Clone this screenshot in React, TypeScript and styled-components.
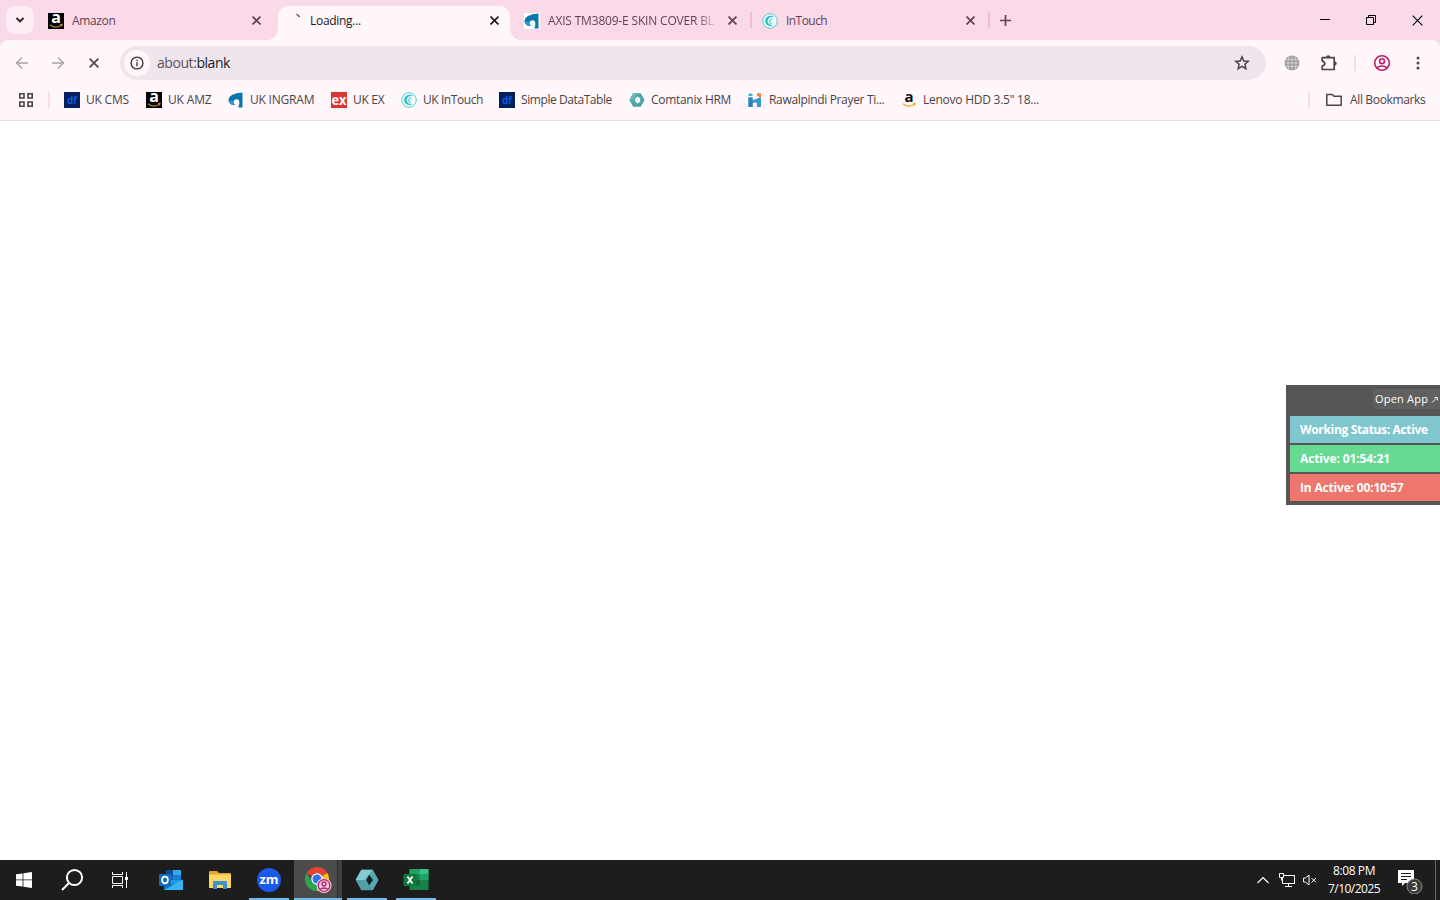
import React from "react";
import styled, { createGlobalStyle } from "styled-components";

const GlobalStyle = createGlobalStyle`
  *, *::before, *::after { box-sizing: border-box; }
  body { margin: 0; background: #fff; overflow: hidden; }
  svg { display: block; flex: none; }
`;

const UI_FONT = `"Segoe UI", "Open Sans", "Noto Sans", sans-serif`;

const Screen = styled.div`
  display: flex;
  flex-direction: column;
  width: 1440px;
  height: 900px;
  font-family: ${UI_FONT};
  font-size: 12px;
  color: #4b4347;
`;

const Label = styled.span<{ $w?: number; $track?: number; $color?: string }>`
  flex: none;
  width: ${(p) => (p.$w ? `${p.$w}px` : "auto")};
  line-height: 16px;
  letter-spacing: ${(p) => p.$track ?? 0}px;
  color: ${(p) => p.$color ?? "inherit"};
  white-space: nowrap;
`;

const TabStrip = styled.header`
  display: flex;
  height: 40px;
  flex: none;
  background: #fad9e9;
  color: #673f54;
`;

const TabSearchSlot = styled.div`
  width: 40px;
  padding: 6px 0 0 6px;
`;

const TabSearch = styled.button`
  display: grid;
  place-items: center;
  width: 28px;
  height: 28px;
  padding: 0;
  border: 0;
  border-radius: 9px;
  background: #fdedf5;
`;

const TabBox = styled.div<{ $active?: boolean; $divider?: boolean }>`
  position: relative;
  display: flex;
  align-items: center;
  width: 238px;
  padding: 1px 17px 0 8px;
  ${(p) =>
    p.$active &&
    `
    width: 232px;
    margin: 6px 6px 0 0;
    padding: 0 11px 5px 8px;
    border-radius: 10px 10px 0 0;
    background: #fff7fa;
    color: #201a1d;
    &::before, &::after {
      content: "";
      position: absolute;
      bottom: 0;
      width: 10px;
      height: 10px;
    }
    &::before { left: -10px; background: radial-gradient(circle at 0 0, transparent 9.5px, #fff7fa 10px); }
    &::after { right: -10px; background: radial-gradient(circle at 100% 0, transparent 9.5px, #fff7fa 10px); }
  `}
  ${(p) =>
    p.$divider &&
    `
    &::after {
      content: "";
      position: absolute;
      right: 2px;
      top: 12px;
      width: 2px;
      height: 16px;
      background: #f5b9dc;
    }
  `}
`;

const TabTitle = styled.span<{ $track: number; $fade?: boolean }>`
  flex: 1;
  margin-left: 8px;
  margin-right: 12px;
  overflow: hidden;
  line-height: 18px;
  letter-spacing: ${(p) => p.$track}px;
  white-space: nowrap;
  ${(p) => p.$fade && `mask-image: linear-gradient(90deg, #000 148px, transparent 171px);`}
`;

const NewTab = styled.div`
  display: grid;
  place-items: center;
  width: 27px;
`;

const WindowControls = styled.div`
  display: flex;
  margin-left: auto;
`;

const WindowButton = styled.div`
  display: grid;
  place-items: center;
  width: 46px;
  height: 40px;
`;

const ToolbarBack = styled.div`
  flex: none;
  height: 81px;
  background: #fad9e9;
`;

const Toolbar = styled.div`
  height: 81px;
  border-bottom: 1px solid #e8dfe4;
  border-radius: 8px 8px 0 0;
  background: #fff7fa;
`;

const NavRow = styled.div`
  display: flex;
  align-items: center;
  height: 40px;
  padding: 6px 0 0 4px;
`;

const NavButton = styled.div<{ $w?: number }>`
  display: grid;
  place-items: center;
  flex: none;
  width: ${(p) => p.$w ?? 36}px;
  height: 34px;
`;

const Omnibox = styled.div`
  display: flex;
  flex: none;
  align-items: center;
  width: 1146px;
  height: 34px;
  margin-left: 8px;
  padding: 0 16px 0 4px;
  border-radius: 17px;
  background: #efe5ed;
`;

const SiteInfo = styled.div`
  display: grid;
  place-items: center;
  width: 26px;
  height: 26px;
  border-radius: 50%;
  background: #fff7fa;
`;

const Address = styled.span`
  flex: 1;
  margin-left: 7px;
  font-size: 14px;
  line-height: 20px;
  letter-spacing: -0.44px;
  color: #5d5359;
  b { font-weight: 400; color: #201a1d; }
`;

const VerticalRule = styled.i<{ $h: number }>`
  flex: none;
  width: 2px;
  height: ${(p) => p.$h}px;
  background: #fadbe9;
`;

const BookmarksRow = styled.div`
  display: flex;
  align-items: center;
  height: 40px;
  padding: 0 0 0 18px;
`;

const BookmarkDividerSlot = styled.div`
  display: flex;
  width: 30px;
  padding-left: 14px;
`;

const Bookmark = styled.div<{ $w: number }>`
  display: flex;
  align-items: center;
  gap: 6px;
  flex: none;
  width: ${(p) => p.$w}px;
`;

const AllBookmarks = styled.div`
  display: flex;
  align-items: center;
  gap: 8px;
  margin-left: auto;
  width: 132px;
  svg { margin-left: 8px; }
`;

const Page = styled.main`
  flex: 1;
  display: flex;
  align-items: flex-start;
  justify-content: flex-end;
  padding-top: 264px;
  background: #fff;
`;

const StatusWidget = styled.aside`
  display: flex;
  flex-direction: column;
  gap: 2px;
  width: 154px;
  height: 120px;
  padding: 4px 0 0 4px;
  background: #565656;
  color: #fff;
`;

const OpenApp = styled.div`
  display: flex;
  align-items: center;
  align-self: flex-end;
  width: 67px;
  height: 20px;
  margin-bottom: 5px;
  padding-left: 2px;
  background: #606060;
  font-size: 11px;
`;

const StatusLine = styled.div<{ $bg: string; $track: number }>`
  height: 27px;
  padding-left: 10px;
  background: ${(p) => p.$bg};
  font-size: 12px;
  font-weight: 700;
  line-height: 27px;
  letter-spacing: ${(p) => p.$track}px;
  white-space: nowrap;
`;

const Taskbar = styled.footer`
  display: flex;
  flex: none;
  height: 40px;
  background: #1d1d1d;
  color: #fff;
`;

const TaskButton = styled.div<{ $w?: number; $running?: boolean; $focused?: boolean }>`
  display: grid;
  place-items: center;
  flex: none;
  width: ${(p) => p.$w ?? 49}px;
  ${(p) =>
    p.$running &&
    `
    width: 40px;
    margin-right: 9px;
    border-bottom: 2px solid #76b9ed;
    padding-top: 2px;
  `}
  ${(p) =>
    p.$focused &&
    `
    width: 48px;
    margin: 0 5px 0 -4px;
    background: linear-gradient(90deg, #4b4b4b 43px, #2b2b2b 43px, #2b2b2b 44px, #404040 44px);
  `}
`;

const Tray = styled.div`
  display: flex;
  align-items: center;
  margin-left: auto;
`;

const TrayIcon = styled.div<{ $w: number }>`
  display: grid;
  place-items: center;
  width: ${(p) => p.$w}px;
`;

const Clock = styled.div`
  display: flex;
  flex-direction: column;
  align-items: center;
  width: 68px;
  gap: 2px;
  padding-bottom: 1px;
`;

const Notifications = styled.div`
  display: flex;
  align-items: center;
  width: 47px;
  padding-left: 10px;
`;

const ShowDesktop = styled.div`
  width: 5px;
  height: 40px;
  border-left: 1px solid #666;
`;

const AmazonIcon = ({ dark = true }: { dark?: boolean }) => (
  <svg width="16" height="16" viewBox="0 0 16 16">
    {dark && <rect width="16" height="16" fill="#000" />}
    <text x="8" y="10.300" textAnchor="middle" fontFamily="Open Sans" fontWeight="700" fontSize={dark ? 16 : 15} fill={dark ? "#fff" : "#111"}>a</text>
    <path d="M2 11.800c3.400 2.800 7.800 2.800 11 .7M12 11.700l2-.2-.5 1.900" fill="none" stroke={dark ? "#b98432" : "#f9a11b"} strokeWidth="1.200" />
  </svg>
);

const DfIcon = () => (
  <svg width="16" height="16" viewBox="0 0 16 16">
    <rect width="16" height="16" fill="#03205c" />
    <text x="3" y="12" fontFamily="Open Sans" fontWeight="600" fontSize="10.500" textLength="10" lengthAdjust="spacingAndGlyphs" fill="#0763f5">df</text>
  </svg>
);

const IngramIcon = ({ plate }: { plate?: boolean }) => (
  <svg width="16" height="16" viewBox="0 0 16 16">
    {plate && <rect width="16" height="16" fill="#fff" />}
    <path d="M4 3Q8 .6 14.500.500V15.500H10.300C11.900 12 11.700 8.500 9.800 7.600 8 6.700 5.800 8 5.500 9.500 5.300 10.800 6 12 7 13 3 13.200.5 11 .6 8 .7 5.800 2 4 4 3Z" fill="#0877ae" />
    <path d="M.6 8.200C.7 11 3 13.100 7 13 6 12 5.400 10.800 5.500 9.300Z" fill="#2c9bd2" />
  </svg>
);

const ExIcon = () => (
  <svg width="16" height="16" viewBox="0 0 16 16">
    <rect width="16" height="16" fill="#dc3433" />
    <text x="0.500" y="12.500" fontFamily="Open Sans" fontWeight="700" fontSize="15" textLength="15" lengthAdjust="spacingAndGlyphs" fill="#fff">ex</text>
  </svg>
);

const InTouchIcon = () => (
  <svg width="16" height="16" viewBox="0 0 16 16" fill="none">
    <circle cx="8" cy="8" r="7.300" stroke="#5bcbd0" strokeWidth="1" fill="#effcfc" />
    <path d="M12.300 3.800C9.300 1.500 3.200 3.200 3.200 8.100c0 4.500 5.300 6.300 8.600 3.800-3.700.7-6.200-1-6.200-3.800 0-3.300 3.500-4.800 6.700-4.300Z" fill="#28bfc7" />
    <path d="M10.800 5.700C7.200 5.600 6.600 10 9.700 10.600" stroke="#57d1d6" strokeWidth="1.100" />
  </svg>
);

const ComtanixIcon = ({ size = 16 }: { size?: number }) =>
  size <= 16 ? (
    <svg width="16" height="16" viewBox="0 0 16 16">
      <path d="M4.200 1.200h7.600L15.600 8l-3.800 6.800H4.200L.4 8Z" fill="#4ba5aa" />
      <path d="M4.200 1.200h4L6.500 4.500 4.500 8H.4Z" fill="#68b9bd" />
      <path d="M8.500 4.500 11.200 6.300v3.400L8.500 11.500 6.200 9.700V6.300Z" fill="#f1fafa" />
    </svg>
  ) : (
    <svg width={size} height={size} viewBox="0 0 16 16">
      <path d="M4.200 1.200h7.600L15.600 8l-3.800 6.800H4.200L.4 8Z" fill="#529ea5" />
      <path d="M4.200 1.200h7.600L9.400 4.500 6.600 8H.4Z" fill="#83cbd0" />
      <path d="M11.800 1.200 15.600 8l-3.800 6.800L9.400 11.500 12 8 9.400 4.500Z" fill="#5ba7ae" />
      <path d="M9.400 4.500 12 8l-2.600 3.500L7.500 8Z" fill="#10252e" />
    </svg>
  );

const PrayerIcon = () => (
  <svg width="16" height="16" viewBox="0 0 16 16">
    <path d="M1.500 5.500h4v3C8 6.500 14 6.300 14 10V15h-4v-3.300C10 10 5.500 10 5.500 12v3h-4Z" fill="#3897ce" />
    <path d="M10 6.500 14 5v5h-4Z" fill="#3897ce" />
    <path d="M1.500 5.500h4V15h-4Z" fill="#2785bd" />
    <path d="M1.500 1.500h4v2.500h-4Z" fill="#4ba8da" />
    <path d="M10 1.200h4V5.200h-1.500L10 3.500Z" fill="#f08235" />
  </svg>
);

const Cross = ({ color = "#673f54", size = 8, width = 1.6 }: { color?: string; size?: number; width?: number }) => (
  <svg width={size} height={size} viewBox="0 0 8 8" stroke={color} strokeWidth={(width * 8) / size}>
    <path d="M.5.5l7 7m0-7l-7 7" />
  </svg>
);

const SpinnerArc = () => (
  <svg width="16" height="16" viewBox="0 0 16 16">
    <path d="M10.300.800Q12.800 1.500 14.300 3.800L13 4.300 10 1.600Z" fill="#665a61" />
  </svg>
);

const Arrow = ({ flip }: { flip?: boolean }) => (
  <svg width="14" height="14" viewBox="0 0 14 14" fill="none" stroke="#aba3a8" strokeWidth="1.500" transform={flip ? "scale(-1 1)" : undefined}>
    <path d="M13 7H2M7 1.500 1.500 7 7 12.500" />
  </svg>
);

const InfoIcon = () => (
  <svg width="14" height="14" viewBox="0 0 14 14" fill="none" stroke="#40363b" strokeWidth="1.400">
    <circle cx="7" cy="7" r="5.900" />
    <path d="M7 6.200V10.200M7 3.800v1.400" />
  </svg>
);

const StarIcon = () => (
  <svg width="16" height="16" viewBox="0 0 16 16" fill="none" stroke="#4b4347" strokeWidth="1.500">
    <path d="M8 1.900 9.800 6l4.400.4-3.300 2.900 1 4.400L8 11.400l-3.900 2.300 1-4.400L1.800 6.400 6.200 6Z" />
  </svg>
);

const GlobeIcon = () => (
  <svg width="16" height="16" viewBox="0 0 16 16">
    <circle cx="8" cy="8" r="7.400" fill="#9a9a9a" />
    <path d="M8 .5v15M1.500 4.500h13M1.500 11.500h13M.5 8h15M5.200 1.200C3.500 5.500 3.500 10.500 5.200 14.800M10.800 1.200c1.700 4.300 1.700 9.300 0 13.600" fill="none" stroke="#ddd8da" strokeWidth=".8" />
  </svg>
);

const PuzzleIcon = () => (
  <svg width="18" height="18" viewBox="0 0 18 18">
    <path d="M2.200 3.700H14.200V15.500H2.200V12C5.600 11.300 5.600 7.800 2.200 7.100Z" fill="none" stroke="#4b4347" strokeWidth="1.700" strokeLinejoin="round" />
    <path d="M6.200 3.200a2 2 0 0 1 4 0ZM14.700 7.500a2 2 0 0 1 0 4Z" fill="#4b4347" />
  </svg>
);

const ProfileIcon = () => (
  <svg width="18" height="18" viewBox="0 0 18 18" fill="none" stroke="#b8206c" strokeWidth="1.600">
    <circle cx="9" cy="9" r="7.300" />
    <circle cx="9" cy="7.200" r="2.400" />
    <path d="M4 14c2.600-2.700 7.400-2.700 10 0" />
  </svg>
);

const OutlookIcon = () => (
  <svg width="24" height="24" viewBox="0 0 24 24">
    <path d="M7 2h15v11H7Z" fill="#1167b8" />
    <path d="M14 2h8v5h-8Z" fill="#36a8ee" />
    <path d="M14 7h8v5h-8Z" fill="#167fd3" />
    <path d="M7 2h7v5H7Z" fill="#0a4c98" />
    <path d="M5 12h19v10H5Z" fill="#2495df" />
    <path d="m24 11.500-19 10.500h18a1 1 0 0 0 1-1Z" fill="#35b5f2" />
    <path d="M5 12v10l9-5Z" fill="#1475c3" />
    <rect y="6" width="12" height="12" rx="1" fill="#0f6cbe" />
    <ellipse cx="6" cy="12" rx="2.900" ry="3.300" fill="none" stroke="#fff" strokeWidth="1.700" />
  </svg>
);

const ExplorerIcon = () => (
  <svg width="24" height="20" viewBox="0 0 24 20">
    <path d="M1 2q0-1 1-1h7l2 2h11q1 0 1 1v14H1Z" fill="#e5a72e" />
    <path d="M1 4.500h22v13.500H1Z" fill="#fbd665" />
    <path d="M5 19v-7q0-1 1-1h12q1 0 1 1v7h-4v-4H9v4Z" fill="#3d91cf" />
  </svg>
);

const ZoomIcon = () => (
  <svg width="26" height="26" viewBox="0 0 26 26">
    <circle cx="13" cy="13" r="12" fill="#1b59ea" />
    <text x="3.500" y="17" fontFamily="Open Sans" fontWeight="700" fontSize="12" textLength="19" lengthAdjust="spacingAndGlyphs" fill="#fff">zm</text>
  </svg>
);

const ChromeIcon = () => (
  <svg width="28" height="28" viewBox="0 0 28 28">
    <path d="M13 13 2.600 7A12 12 0 0 1 23.400 7Z" fill="#e64335" />
    <path d="M13 13 23.400 7A12 12 0 0 1 13 25Z" fill="#fbc116" />
    <path d="M13 13v12A12 12 0 0 1 2.600 7l5.200 9Z" fill="#2fa44f" />
    <circle cx="13" cy="13" r="5.800" fill="#fff" />
    <circle cx="13" cy="13" r="4.500" fill="#2b74e8" />
    <circle cx="20" cy="19.500" r="7.500" fill="#f9cfe0" />
    <g fill="none" stroke="#b8206c" strokeWidth="1.300">
      <circle cx="20" cy="19.500" r="5.800" />
      <circle cx="20" cy="18" r="2" />
      <path d="M16 23.500c2.200-2 5.800-2 8 0" />
    </g>
  </svg>
);

const ExcelIcon = () => (
  <svg width="26" height="24" viewBox="-0.500 0 26 24">
    <path d="M6 1h19v21H6Z" fill="#178246" />
    <path d="M6 1h10v5.500H6Z" fill="#21a063" />
    <path d="M16 1h9v5.500h-9Z" fill="#35c481" />
    <path d="M16 6.500h9V12h-9Z" fill="#20a366" />
    <path d="M6 12h10v5H6Z" fill="#155c38" />
    <rect x="0" y="6" width="13" height="12" rx="1" fill="#107940" />
    <path d="m4 8.500 5 7m0-7-5 7" stroke="#fff" strokeWidth="1.800" />
  </svg>
);

const tabs = [
  { title: "Amazon", track: -0.35, icon: <AmazonIcon /> },
  { title: "Loading...", track: -0.3, icon: <SpinnerArc />, active: true },
  { title: "AXIS TM3809-E SKIN COVER BL", track: -0.18, icon: <IngramIcon plate />, divider: true, fade: true },
  { title: "InTouch", track: -0.55, icon: <InTouchIcon />, divider: true },
];

const bookmarks = [
  { label: "UK CMS", w: 82, track: -0.2, icon: <DfIcon /> },
  { label: "UK AMZ", w: 82, track: -0.15, icon: <AmazonIcon /> },
  { label: "UK INGRAM", w: 103, track: -0.2, icon: <IngramIcon /> },
  { label: "UK EX", w: 70, track: -0.3, icon: <ExIcon /> },
  { label: "UK InTouch", w: 98, track: -0.43, icon: <InTouchIcon /> },
  { label: "Simple DataTable", w: 130, track: -0.42, icon: <DfIcon /> },
  { label: "Comtanix HRM", w: 118, track: -0.3, icon: <ComtanixIcon /> },
  { label: "Rawalpindi Prayer Ti...", w: 154, track: -0.33, icon: <PrayerIcon /> },
  { label: "Lenovo HDD 3.5\" 18...", w: 140, track: -0.25, icon: <AmazonIcon dark={false} /> },
];

export default function App() {
  return (
    <Screen>
      <GlobalStyle />
      <TabStrip>
        <TabSearchSlot>
          <TabSearch>
            <svg width="10" height="8" viewBox="0 0 10 8" fill="none" stroke="#2d2027" strokeWidth="1.900"><path d="m1.500 2 3.500 3.500L8.500 2" /></svg>
          </TabSearch>
        </TabSearchSlot>
        {tabs.map((t) => (
          <TabBox key={t.title} $active={t.active} $divider={t.divider}>
            {t.icon}
            <TabTitle $track={t.track} $fade={t.fade}>{t.title}</TabTitle>
            <Cross color={t.active ? "#201a1d" : undefined} size={9} width={1.7} />
          </TabBox>
        ))}
        <NewTab>
          <svg width="11" height="11" viewBox="0 0 11 11" stroke="#673f54" strokeWidth="1.700"><path d="M5.500 0v11M0 5.500h11" /></svg>
        </NewTab>
        <WindowControls>
          <WindowButton><svg width="10" height="10" viewBox="0 0 10 10"><path d="M0 4h10v1H0Z" /></svg></WindowButton>
          <WindowButton><svg width="10" height="10" viewBox="0 0 10 10" fill="none" stroke="#000"><path d="M.5 2.500h7v7h-7ZM2.500 2.500v-2h7v7h-2" /></svg></WindowButton>
          <WindowButton><Cross color="#000" size={11} width={1.1} /></WindowButton>
        </WindowControls>
      </TabStrip>

      <ToolbarBack>
        <Toolbar>
          <NavRow>
            <NavButton><Arrow /></NavButton>
            <NavButton><Arrow flip /></NavButton>
            <NavButton><Cross color="#4b4347" size={10} width={1.6} /></NavButton>
            <Omnibox>
              <SiteInfo><InfoIcon /></SiteInfo>
              <Address>about:<b>blank</b></Address>
              <StarIcon />
            </Omnibox>
            <NavButton $w={51}><GlobeIcon /></NavButton>
            <NavButton $w={24}><PuzzleIcon /></NavButton>
            <NavButton $w={28}><VerticalRule $h={16} /></NavButton>
            <NavButton $w={26}><ProfileIcon /></NavButton>
            <NavButton $w={46}>
              <svg width="4" height="14" viewBox="0 0 4 14" fill="#4b4347"><circle cx="2" cy="2" r="1.500" /><circle cx="2" cy="7" r="1.500" /><circle cx="2" cy="12" r="1.500" /></svg>
            </NavButton>
          </NavRow>
          <BookmarksRow>
            <svg width="16" height="16" viewBox="0 0 16 16" fill="none" stroke="#4b4347" strokeWidth="1.600"><path d="M1.800 1.800h4.200v4.200H1.800ZM10 1.800h4.200v4.200H10ZM1.800 10h4.200v4.200H1.800ZM10 10h4.200v4.200H10Z" /></svg>
            <BookmarkDividerSlot><VerticalRule $h={16} /></BookmarkDividerSlot>
            {bookmarks.map((b) => (
              <Bookmark key={b.label} $w={b.w}>
                {b.icon}
                <Label $track={b.track}>{b.label}</Label>
              </Bookmark>
            ))}
            <AllBookmarks>
              <VerticalRule $h={16} />
              <svg width="16" height="14" viewBox="0 0 16 14" fill="none" stroke="#4b4347" strokeWidth="1.500" strokeLinejoin="round"><path d="M.8 1.500h5.500L8 3.300h7.200v9H.8Z" /></svg>
              <Label $track={-0.35}>All Bookmarks</Label>
            </AllBookmarks>
          </BookmarksRow>
        </Toolbar>
      </ToolbarBack>

      <Page>
        <StatusWidget>
          <OpenApp>
            <Label $w={55} $track={0.2}>Open App</Label>
            <svg width="9" height="10" viewBox="0 0 9 10" fill="none" stroke="#fff"><path d="m2 8.500 4-4M4.500 3.500h2.800v2.800" /></svg>
          </OpenApp>
          <StatusLine $bg="#80c6cf" $track={-0.34}>Working Status: Active</StatusLine>
          <StatusLine $bg="#67d993" $track={-0.12}>Active: 01:54:21</StatusLine>
          <StatusLine $bg="#ed776c" $track={-0.18}>In Active: 00:10:57</StatusLine>
        </StatusWidget>
      </Page>

      <Taskbar>
        <TaskButton $w={48}>
          <svg width="16" height="16" viewBox="0 0 16 16" fill="#fff"><path d="M0 2.300 6.600 1.400V7.500H0ZM7.400 1.300 16 0v7.500H7.400ZM0 8.300h6.600v6.300L0 13.700ZM7.400 8.300H16V16l-8.600-1.200Z" /></svg>
        </TaskButton>
        <TaskButton $w={48}>
          <svg width="24" height="24" viewBox="0 0 24 24" fill="none" stroke="#fff" strokeWidth="2"><circle cx="14.500" cy="9.500" r="7.600" /><path d="M9 15 2 22" /></svg>
        </TaskButton>
        <TaskButton $w={48}>
          <svg width="16" height="16" viewBox="0 0 16 16" fill="none" stroke="#fff"><path d="M.5 0v2.500h10V0M.5 16v-2.500h10V16M.5 4.500h10v7H.5ZM14.500 0v16" /><path d="M13 5h3v3h-3Z" fill="#fff" stroke="none" /></svg>
        </TaskButton>
        <TaskButton $w={53}><OutlookIcon /></TaskButton>
        <TaskButton $w={46}><ExplorerIcon /></TaskButton>
        <TaskButton $w={6} />
        <TaskButton $running><ZoomIcon /></TaskButton>
        <TaskButton $running $focused><ChromeIcon /></TaskButton>
        <TaskButton $running><ComtanixIcon size={24} /></TaskButton>
        <TaskButton $running><ExcelIcon /></TaskButton>
        <Tray>
          <TrayIcon $w={22}>
            <svg width="12" height="8" viewBox="0 0 12 8" fill="none" stroke="#fff" strokeWidth="1.200"><path d="M.5 7 6 1.500 11.500 7" /></svg>
          </TrayIcon>
          <TrayIcon $w={26}>
            <svg width="17" height="14" viewBox="0 0 17 14" fill="none" stroke="#fff"><path d="M5 2.500h10.500v8H3.500V5M9.500 10.500v3M6 13.500h7M.5.500h4v4h-4ZM2.500 4.500v3" /></svg>
          </TrayIcon>
          <TrayIcon $w={20}>
            <svg width="16" height="12" viewBox="0 0 16 12" fill="none" stroke="#fff"><path d="M1.500 4h2L7 1v10L3.500 8h-2ZM9.500 4l4.500 4.500M14 4 9.500 8.500" /></svg>
          </TrayIcon>
          <Clock>
            <Label $track={-0.4}>8:08 PM</Label>
            <Label $track={-0.52}>7/10/2025</Label>
          </Clock>
          <Notifications>
            <svg width="26" height="28" viewBox="0 -2 26 28">
              <path d="M0 2h16v13H7l-3 3v-3H0Z" fill="#fff" />
              <path d="M3 5.500h10M3 8.500h10M3 11.500h6" stroke="#1d1d1d" />
              <circle cx="16.500" cy="18.500" r="7.500" fill="#3b3b3b" stroke="#8c8c8c" />
              <text x="16.500" y="23" textAnchor="middle" fontFamily="Open Sans" fontSize="12" fill="#fff">3</text>
            </svg>
          </Notifications>
          <ShowDesktop />
        </Tray>
      </Taskbar>
    </Screen>
  );
}
